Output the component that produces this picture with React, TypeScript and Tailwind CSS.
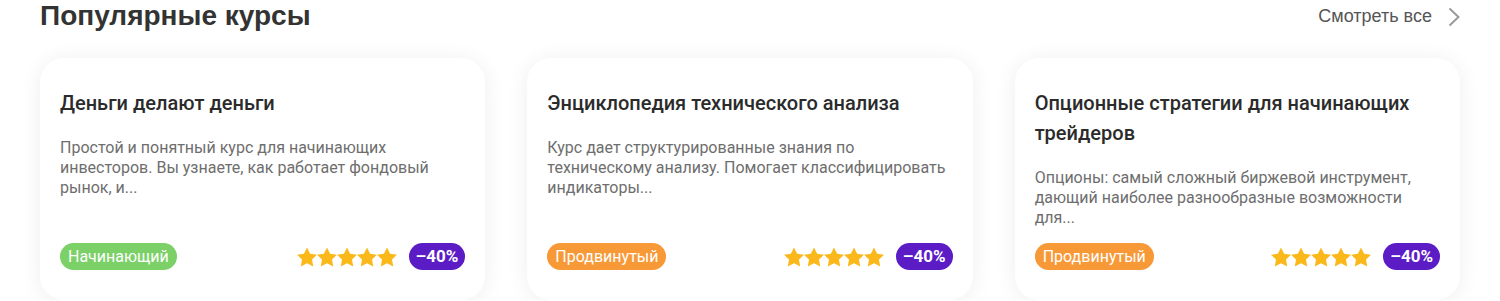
import React from 'react';

type Course = {
  title: string;
  text: string;
  level: 'Начинающий' | 'Продвинутый';
  discount: string;
};

const COURSES: Course[] = [
  {
    title: 'Деньги делают деньги',
    text: 'Простой и понятный курс для начинающих инвесторов. Вы узнаете, как работает фондовый рынок, и...',
    level: 'Начинающий',
    discount: '–40%',
  },
  {
    title: 'Энциклопедия технического анализа',
    text: 'Курс дает структурированные знания по техническому анализу. Помогает классифицировать индикаторы...',
    level: 'Продвинутый',
    discount: '–40%',
  },
  {
    title: 'Опционные стратегии для начинающих трейдеров',
    text: 'Опционы: самый сложный биржевой инструмент, дающий наиболее разнообразные возможности для...',
    level: 'Продвинутый',
    discount: '–40%',
  },
];

function Star() {
  return (
    <svg width="20" height="20" viewBox="2 1.6 20 19.6" className="fill-[#fbb81b]">
      <path d="M12 1.8l3.1 6.3 6.9 1-5 4.9 1.2 6.9L12 17.6l-6.2 3.3L7 14l-5-4.9 6.9-1z" />
    </svg>
  );
}

function CourseCard({ course }: { course: Course }) {
  const levelColor = course.level === 'Начинающий' ? 'bg-[#7bd067]' : 'bg-[#f89937]';
  return (
    <div className="flex flex-col rounded-[24px] bg-white px-5 pt-[30px] pb-[30px] shadow-[0_2px_22px_rgba(0,0,0,0.07)]">
      <h3 className="text-[20px] font-medium leading-[30px] text-[#2b2b2b]">{course.title}</h3>
      <p className="mt-5 text-[16px] leading-[20px] text-[#6e6e6e]">{course.text}</p>
      <div className="mt-auto flex items-center justify-between pt-[15px]">
        <span className={`${levelColor} rounded-full px-[8px] text-[16px] leading-[27px] text-white`}>
          {course.level}
        </span>
        <div className="flex items-center">
          <div className="flex items-center">
            <Star />
            <Star />
            <Star />
            <Star />
            <Star />
          </div>
          <span className="ml-[12px] rounded-full bg-[#5b1cc6] px-[7px] text-[17px] font-bold leading-[27px] text-white">
            {course.discount}
          </span>
        </div>
      </div>
    </div>
  );
}

export default function App() {
  return (
    <div className="bg-white px-10 font-['Roboto',sans-serif]">
      <div className="flex items-center justify-between pt-[1px]">
        <h2 className="font-['Liberation_Sans',Arial,sans-serif] text-[28px] font-bold leading-[28px] text-[#333333]">
          Популярные курсы
        </h2>
        <a href="#" className="flex items-center gap-4 pt-[2px] font-['Liberation_Sans',Arial,sans-serif] text-[18px] text-[#555555]">
          Смотреть все
          <svg width="12" height="20" viewBox="0 0 12 20" fill="none" className="stroke-[#9a9a9a]">
            <path d="M1.5 1.5l9 8.5-9 8.5" strokeWidth="2" />
          </svg>
        </a>
      </div>
      <div className="mt-[28px] grid grid-cols-3 gap-[42px]">
        {COURSES.map((c) => (
          <CourseCard key={c.title} course={c} />
        ))}
      </div>
    </div>
  );
}
